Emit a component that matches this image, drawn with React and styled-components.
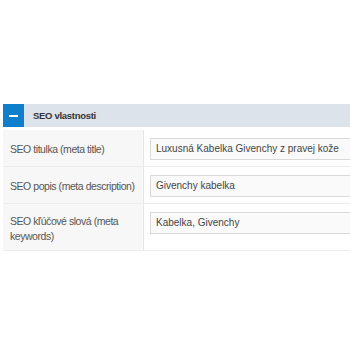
import React from "react";
import styled, { createGlobalStyle } from "styled-components";

const Global = createGlobalStyle`
  body {
    margin: 0;
    background: #ffffff;
    font-family: "Liberation Sans", Arial, sans-serif;
  }
`;

const rows = [
  { label: "SEO titulka (meta title)", value: "Luxusná Kabelka Givenchy z pravej kože" },
  { label: "SEO popis (meta description)", value: "Givenchy kabelka" },
  { label: "SEO kľúčové slová (meta keywords)", value: "Kabelka, Givenchy", tall: true },
];

const App = () => {
  return (
    <Page>
      <Global />
      <Panel>
        <Header>
          <Toggle>
            <Minus />
          </Toggle>
          <Title>SEO vlastnosti</Title>
        </Header>
        {rows.map((row) => (
          <Row key={row.label} $tall={row.tall}>
            <Label $tall={row.tall}>{row.label}</Label>
            <Field>
              <Input>{row.value}</Input>
            </Field>
          </Row>
        ))}
      </Panel>
    </Page>
  );
};
export default App;

const Page = styled.div`
  width: 350px;
  height: 350px;
  padding: 104px 0 0 3px;
  box-sizing: border-box;
  overflow: hidden;
`;

const Panel = styled.div`
  width: 420px;
`;

const Header = styled.div`
  display: flex;
  align-items: center;
  height: 23px;
  background: #dde3ea;
  margin-bottom: 3px;
`;

const Toggle = styled.div`
  display: flex;
  justify-content: center;
  align-items: center;
  width: 21px;
  height: 23px;
  background: #0f7fcb;
`;

const Minus = styled.span`
  width: 9px;
  height: 2px;
  background: #ffffff;
`;

const Title = styled.span`
  margin-left: 9px;
  font-size: 9.5px;
  letter-spacing: -0.3px;
  font-weight: bold;
  color: #333333;
`;

const Row = styled.div`
  display: flex;
  height: ${(p) => (p.$tall ? "46px" : "36px")};
  border-bottom: 1px solid #ececec;
`;

const Label = styled.div`
  width: 141px;
  box-sizing: border-box;
  padding: ${(p) => (p.$tall ? "10px 4px 0 7px" : "12px 4px 0 7px")};
  background: #f7f7f7;
  border-right: 1px solid #e5e5e5;
  font-size: 10.5px;
  letter-spacing: -0.45px;
  line-height: 15px;
  color: #555555;
`;

const Field = styled.div`
  flex: 1;
  padding: 8px 0 0 6px;
`;

const Input = styled.div`
  height: 20px;
  padding: 0 5px;
  border: 1px solid #d9d9d9;
  background: #fafafa;
  font-size: 10px;
  line-height: 20px;
  color: #444444;
`;
